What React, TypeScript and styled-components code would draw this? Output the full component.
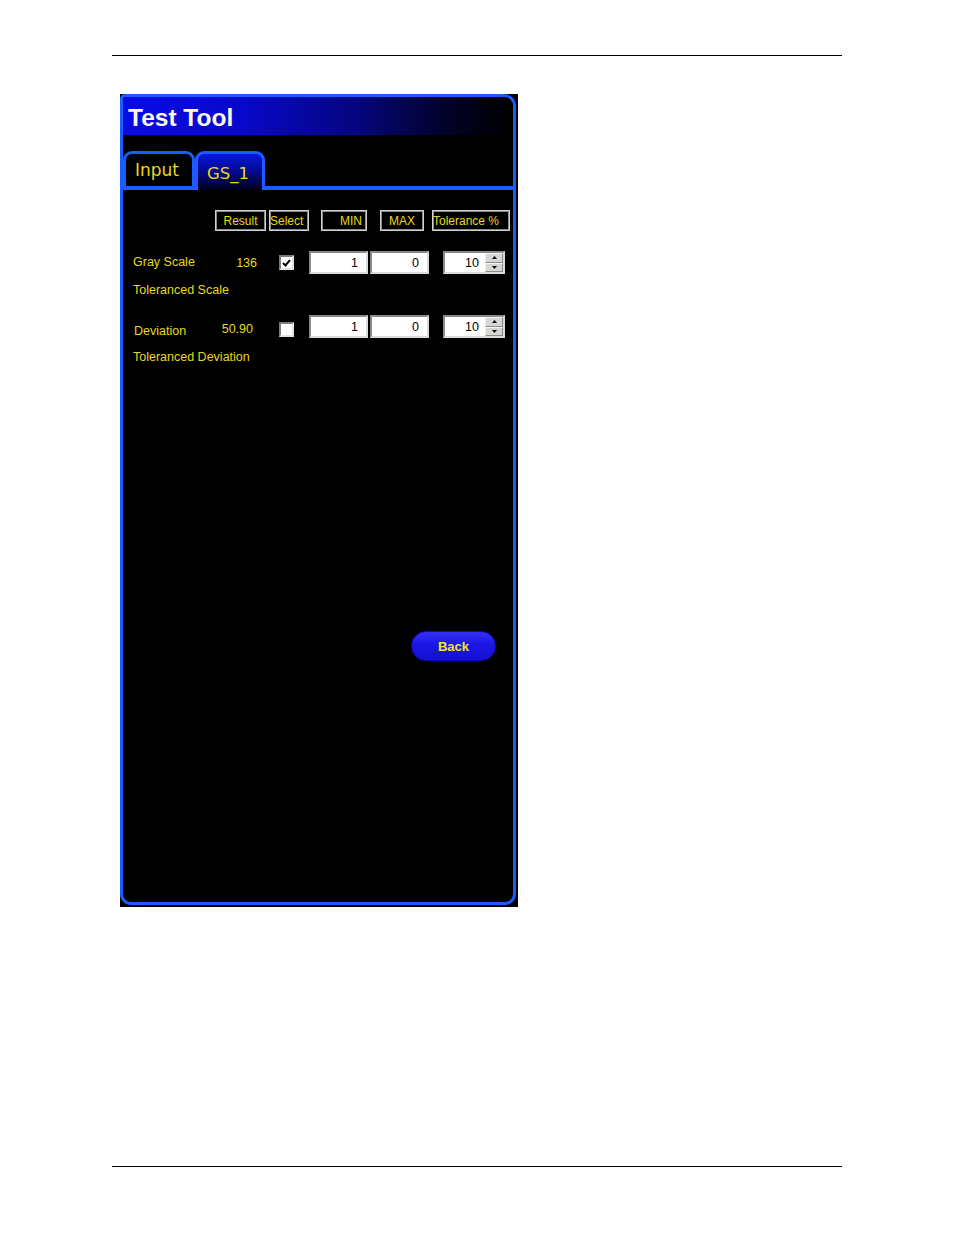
import React from 'react';
import styled, { createGlobalStyle } from 'styled-components';

const BLUE = '#1a5cff';
const YELLOW = '#e8d81a';
const SANS = '"Liberation Sans", Arial, sans-serif';
const TAB_FONT = '"DejaVu Sans", Verdana, sans-serif';

const GlobalStyle = createGlobalStyle`
  html, body { margin: 0; padding: 0; background: #fff; }
  body { font-family: ${SANS}; }
`;

const Page = styled.div`
  width: 954px;
  height: 1235px;
  box-sizing: border-box;
  padding-top: 55px;
  display: flex;
  flex-direction: column;
`;

const Rule = styled.div<{ $mt?: number }>`
  margin: ${p => p.$mt ?? 0}px 0 0 112px;
  width: 730px;
  border-top: 1px solid #000;
`;

const Frame = styled.div`
  margin: 38px 0 0 120px;
  width: 398px;
  height: 813px;
  flex-shrink: 0;
  background: #000;
  box-sizing: border-box;
  padding: 0 2px 2px 0;
`;

const Window = styled.div`
  height: 100%;
  box-sizing: border-box;
  border: 3px solid ${BLUE};
  border-radius: 5px 12px 11px 11px;
  overflow: hidden;
  display: flex;
  flex-direction: column;
  background: #000;
`;

const TitleBar = styled.div`
  height: 38px;
  flex-shrink: 0;
  box-sizing: border-box;
  display: flex;
  align-items: center;
  padding: 4px 0 0 5px;
  background: linear-gradient(to right, #0a0ae8 0%, #0808cc 30%, #05057e 60%, #020224 84%, #000 100%);
  color: #fbf7e6;
  font: bold 24.5px ${SANS};
`;

const TabRow = styled.div`
  margin-top: 16px;
  height: 39px;
  flex-shrink: 0;
  display: flex;
`;

const Tab = styled.div<{ $active?: boolean; $w: number; $pt: number; $fs: number }>`
  width: ${p => p.$w}px;
  height: 39px;
  box-sizing: border-box;
  border: 3px solid ${BLUE};
  border-bottom: ${p => (p.$active ? '0' : `4px solid ${BLUE}`)};
  border-radius: 9px 9px 0 0;
  background: ${p => (p.$active ? 'linear-gradient(to bottom, #0616dc 0%, #040a8a 50%, #00001a 100%)' : '#000')};
  padding: ${p => p.$pt}px 0 0 9px;
  font-family: ${TAB_FONT};
  font-size: ${p => p.$fs}px;
  line-height: 20px;
  color: ${YELLOW};
  white-space: nowrap;
`;

const TabFiller = styled.div`
  flex: 1;
  height: 39px;
  box-sizing: border-box;
  border-bottom: 4px solid ${BLUE};
`;

const Content = styled.div`
  flex: 1;
  display: flex;
  flex-direction: column;
`;

const HeaderRow = styled.div`
  margin-top: 20px;
  padding-left: 92px;
  display: flex;
`;

const HeaderBox = styled.div<{ $w: number; $ml: number; $align: string; $pad?: number }>`
  width: ${p => p.$w}px;
  margin-left: ${p => p.$ml}px;
  height: 21px;
  box-sizing: border-box;
  border: 1px solid #d2d2d2;
  box-shadow: inset 0 0 0 1px #8a8a8a;
  padding: 1px ${p => p.$pad ?? 0}px 0;
  text-align: ${p => p.$align};
  font-size: 12px;
  line-height: 18px;
  color: ${YELLOW};
  white-space: nowrap;
  overflow: hidden;
`;

const DataRow = styled.div<{ $mt: number }>`
  margin-top: ${p => p.$mt}px;
  height: 23px;
  display: flex;
  align-items: center;
`;

const Label = styled.span<{ $indent?: number; $dy?: number }>`
  width: 92px;
  box-sizing: border-box;
  padding-left: ${p => 10 + (p.$indent ?? 0)}px;
  margin-top: ${p => (p.$dy ?? 0) * 2}px;
  font-size: 12.5px;
  color: ${YELLOW};
  white-space: nowrap;
`;

const Value = styled.span<{ $pr?: number; $dy?: number }>`
  width: 42px;
  box-sizing: border-box;
  padding-right: ${p => p.$pr ?? 0}px;
  margin-top: ${p => (p.$dy ?? 0) * 2}px;
  text-align: right;
  font-size: 12.5px;
  color: ${YELLOW};
  white-space: nowrap;
`;

const CheckBox = styled.div<{ $dy?: number }>`
  margin-left: 22px;
  margin-top: ${p => (p.$dy ?? 0) * 2}px;
  width: 15px;
  height: 15px;
  box-sizing: border-box;
  background: #fff;
  border: 2px solid;
  border-color: #7c7c7c #e2e2e2 #e2e2e2 #7c7c7c;
  display: flex;
  align-items: center;
  justify-content: center;
`;

const TextField = styled.div<{ $ml: number }>`
  width: 59px;
  height: 23px;
  margin-left: ${p => p.$ml}px;
  box-sizing: border-box;
  background: #fff;
  border: 2px solid;
  border-color: #8a8a8a #dadada #dadada #8a8a8a;
  padding: 1px 8px 0 0;
  text-align: right;
  font-size: 12.5px;
  line-height: 18px;
  color: #000;
`;

const Spin = styled.div`
  width: 62px;
  height: 23px;
  margin-left: 14px;
  box-sizing: border-box;
  background: #fff;
  border: 2px solid;
  border-color: #8a8a8a #dadada #dadada #8a8a8a;
  display: flex;
`;

const SpinText = styled.div`
  flex: 1;
  padding: 1px 6px 0 0;
  text-align: right;
  font-size: 12.5px;
  line-height: 18px;
  color: #000;
`;

const SpinButtons = styled.div`
  width: 18px;
  display: flex;
  flex-direction: column;
`;

const SpinButton = styled.div`
  flex: 1;
  background: #d6d6d2;
  border: 1px solid;
  border-color: #f4f4f4 #8c8c8c #8c8c8c #f4f4f4;
  display: flex;
  align-items: center;
  justify-content: center;
`;

const SubLabel = styled.div<{ $mt: number }>`
  margin-top: ${p => p.$mt}px;
  padding-left: 10px;
  font-size: 12.5px;
  line-height: 16px;
  color: ${YELLOW};
  white-space: nowrap;
`;

const ButtonRow = styled.div`
  margin-top: 266px;
  padding-right: 17px;
  display: flex;
  justify-content: flex-end;
`;

const BackButton = styled.button`
  width: 85px;
  height: 30px;
  border: 1px solid #1008b8;
  border-radius: 15px;
  background: linear-gradient(to bottom, #3430f4 0%, #1c16e4 45%, #1410d2 100%);
  color: #f2e81c;
  font: bold 13px ${SANS};
  padding: 0;
  cursor: pointer;
`;

const Check = () => (
  <svg width="9" height="8" viewBox="0 0 9 8">
    <path d="M1 4 L3.4 6.5 L8 1.2" fill="none" stroke="#000" strokeWidth="2" />
  </svg>
);

const Arrow = ({ up }: { up?: boolean }) => (
  <svg width="5" height="3" viewBox="0 0 5 3">
    <path d={up ? 'M0 3 L2.5 0 L5 3 Z' : 'M0 0 L2.5 3 L5 0 Z'} fill="#000" />
  </svg>
);

type RowData = {
  label: string;
  value: string;
  checked: boolean;
  min: string;
  max: string;
  tol: string;
  sub: string;
  mt: number;
  subMt: number;
  indent?: number;
  labelDy?: number;
  valuePr?: number;
  valueDy?: number;
  boxDy?: number;
};

const rows: RowData[] = [
  { label: 'Gray Scale', value: '136', checked: true, min: '1', max: '0', tol: '10', sub: 'Toleranced Scale', mt: 20, subMt: 8, labelDy: -0.5 },
  { label: 'Deviation', value: '50.90', checked: false, min: '1', max: '0', tol: '10', sub: 'Toleranced Deviation', mt: 17, subMt: 11, indent: 1, labelDy: 4.5, valuePr: 4, valueDy: 2, boxDy: 3 },
];

export default function App() {
  return (
    <>
      <GlobalStyle />
      <Page>
        <Rule />
        <Frame>
          <Window>
            <TitleBar>Test Tool</TitleBar>
            <TabRow>
              <Tab $w={72} $pt={6} $fs={17}>Input</Tab>
              <Tab $active $w={70} $pt={10} $fs={16.5}>GS_1</Tab>
              <TabFiller />
            </TabRow>
            <Content>
              <HeaderRow>
                <HeaderBox $w={51} $ml={0} $align="center">Result</HeaderBox>
                <HeaderBox $w={40} $ml={3} $align="left">Select</HeaderBox>
                <HeaderBox $w={46} $ml={12} $align="right" $pad={4}>MIN</HeaderBox>
                <HeaderBox $w={44} $ml={13} $align="center">MAX</HeaderBox>
                <HeaderBox $w={78} $ml={8} $align="left">Tolerance %</HeaderBox>
              </HeaderRow>
              {rows.map(r => (
                <React.Fragment key={r.label}>
                  <DataRow $mt={r.mt}>
                    <Label $indent={r.indent} $dy={r.labelDy}>{r.label}</Label>
                    <Value $pr={r.valuePr} $dy={r.valueDy}>{r.value}</Value>
                    <CheckBox $dy={r.boxDy}>{r.checked && <Check />}</CheckBox>
                    <TextField $ml={15}>{r.min}</TextField>
                    <TextField $ml={2}>{r.max}</TextField>
                    <Spin>
                      <SpinText>{r.tol}</SpinText>
                      <SpinButtons>
                        <SpinButton><Arrow up /></SpinButton>
                        <SpinButton><Arrow /></SpinButton>
                      </SpinButtons>
                    </Spin>
                  </DataRow>
                  <SubLabel $mt={r.subMt}>{r.sub}</SubLabel>
                </React.Fragment>
              ))}
              <ButtonRow>
                <BackButton>Back</BackButton>
              </ButtonRow>
            </Content>
          </Window>
        </Frame>
        <Rule $mt={259} />
      </Page>
    </>
  );
}
